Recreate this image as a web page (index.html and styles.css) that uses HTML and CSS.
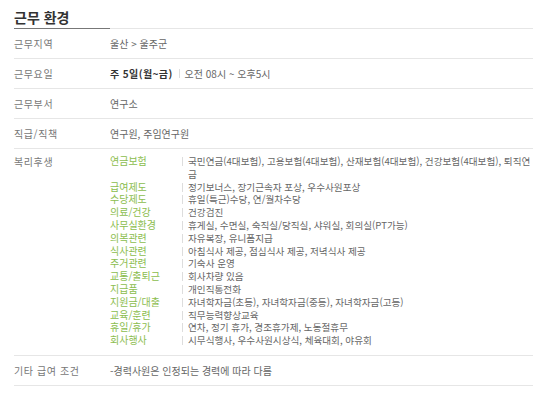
FILE: index.html
```html
<!DOCTYPE html>
<html lang="ko">
<head>
<meta charset="utf-8">
<link rel="stylesheet" href="styles.css">
</head>
<body>
<section class="env">
  <h2 class="title"><span>근무 환경</span></h2>
  <div class="row"><div class="label">근무지역</div><div class="value">울산 &gt; 울주군</div></div>
  <div class="row"><div class="label">근무요일</div><div class="value"><strong>주 5일(월~금)</strong><i class="bar"></i>오전 08시 ~ 오후5시</div></div>
  <div class="row"><div class="label">근무부서</div><div class="value">연구소</div></div>
  <div class="row"><div class="label">직급/직책</div><div class="value">연구원, 주임연구원</div></div>
  <div class="row tall"><div class="label">복리후생</div>
    <dl class="benefits">
      <dt>연금보험</dt><dd>국민연금(4대보험), 고용보험(4대보험), 산재보험(4대보험), 건강보험(4대보험), 퇴직연금</dd>
      <dt>급여제도</dt><dd>정기보너스, 장기근속자 포상, 우수사원포상</dd>
      <dt>수당제도</dt><dd>휴일(특근)수당, 연/월차수당</dd>
      <dt>의료/건강</dt><dd>건강검진</dd>
      <dt>사무실환경</dt><dd>휴게실, 수면실, 숙직실/당직실, 샤워실, 회의실(PT가능)</dd>
      <dt>의복관련</dt><dd>자유복장, 유니폼지급</dd>
      <dt>식사관련</dt><dd>아침식사 제공, 점심식사 제공, 저녁식사 제공</dd>
      <dt>주거관련</dt><dd>기숙사 운영</dd>
      <dt>교통/출퇴근</dt><dd>회사차량 있음</dd>
      <dt>지급품</dt><dd>개인직통전화</dd>
      <dt>지원금/대출</dt><dd>자녀학자금(초등), 자녀학자금(중등), 자녀학자금(고등)</dd>
      <dt>교육/훈련</dt><dd>직무능력향상교육</dd>
      <dt>휴일/휴가</dt><dd>연차, 정기 휴가, 경조휴가제, 노동절휴무</dd>
      <dt>회사행사</dt><dd>시무식행사, 우수사원시상식, 체육대회, 야유회</dd>
    </dl>
  </div>
  <div class="row"><div class="label">기타 급여 조건</div><div class="value">-경력사원은 인정되는 경력에 따라 다름</div></div>
</section>
</body>
</html>
```
FILE: styles.css
```css
html, body { margin: 0; padding: 0; background: #fff; }
body { font-family: "Noto Sans CJK KR", "Noto Sans", sans-serif; color: #666; font-size: 10px; }
.env { width: 519px; margin-left: 14px; }
.title {
  margin: 0; height: 29px; box-sizing: border-box;
  border-bottom: 1px solid #e6e6e6;
  font-size: 14px; font-weight: bold; color: #333; line-height: 1;
  padding-top: 10px;
}
.title span { display: block; width: 96px; height: 19px; border-bottom: 1px solid #777; margin-bottom: -1px; box-sizing: border-box; }
.row {
  display: flex; align-items: center; height: 30px; box-sizing: border-box;
  border-bottom: 1px solid #e6e6e6; line-height: 13px;
}
.label { width: 96px; flex: none; color: #777; letter-spacing: 0.6px; }
.value { color: #666; display: flex; align-items: center; }
.value strong { color: #333; font-weight: bold; letter-spacing: 0.4px; }
.bar { display: inline-block; width: 1px; height: 9px; background: #ddd; margin: 0 5px 0 6px; }
.row.tall { height: auto; align-items: flex-start; padding: 6px 0 8px; }
.benefits { margin: 0; display: grid; grid-template-columns: 72px 1fr; line-height: 12.8px; flex: 1; }
.benefits dt { color: #8cbd4e; }
.benefits dd { margin: 0; padding-left: 6px; position: relative; word-break: break-all; font-size: 9.6px; }
.benefits dd::before { content: ""; position: absolute; left: 0; top: 2px; width: 1px; height: 9px; background: #ddd; }
```
